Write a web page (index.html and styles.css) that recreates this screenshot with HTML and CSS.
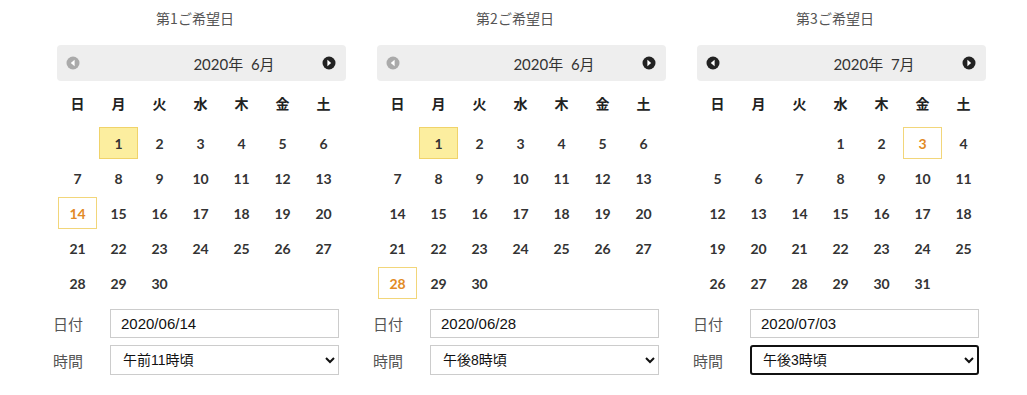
FILE: index.html
```html
<!DOCTYPE html>
<html lang="ja">
<head>
  <meta charset="UTF-8" />
  <meta name="viewport" content="width=device-width, initial-scale=1.0" />
  <title>ご希望日</title>
  <link rel="stylesheet" href="styles.css">
</head>
<body>
  <div class="wishes">

    <div class="wish">
      <div class="wish-title">第1ご希望日</div>
      <div class="cal-head">
        <span class="nav off"><svg width="14" height="14" viewBox="0 0 14 14"><circle cx="7" cy="7" r="6.5"/><path d="M8.6 3.8 L4.8 7 L8.6 10.2 Z"/></svg></span>
        <span class="cal-month">2020年&nbsp; 6月</span>
        <span class="nav"><svg width="14" height="14" viewBox="0 0 14 14"><circle cx="7" cy="7" r="6.5"/><path d="M5.4 3.8 L9.2 7 L5.4 10.2 Z"/></svg></span>
      </div>
      <div class="cal-grid">
        <div class="dow">日</div><div class="dow">月</div><div class="dow">火</div><div class="dow">水</div><div class="dow">木</div><div class="dow">金</div><div class="dow">土</div>
        <div class="day"></div><div class="day"><span class="today">1</span></div><div class="day"><span>2</span></div><div class="day"><span>3</span></div><div class="day"><span>4</span></div><div class="day"><span>5</span></div><div class="day"><span>6</span></div>
        <div class="day"><span>7</span></div><div class="day"><span>8</span></div><div class="day"><span>9</span></div><div class="day"><span>10</span></div><div class="day"><span>11</span></div><div class="day"><span>12</span></div><div class="day"><span>13</span></div>
        <div class="day"><span class="picked">14</span></div><div class="day"><span>15</span></div><div class="day"><span>16</span></div><div class="day"><span>17</span></div><div class="day"><span>18</span></div><div class="day"><span>19</span></div><div class="day"><span>20</span></div>
        <div class="day"><span>21</span></div><div class="day"><span>22</span></div><div class="day"><span>23</span></div><div class="day"><span>24</span></div><div class="day"><span>25</span></div><div class="day"><span>26</span></div><div class="day"><span>27</span></div>
        <div class="day"><span>28</span></div><div class="day"><span>29</span></div><div class="day"><span>30</span></div>
      </div>
      <div class="field">
        <label>日付</label>
        <input type="text" value="2020/06/14">
      </div>
      <div class="field">
        <label>時間</label>
        <select><option>午前11時頃</option></select>
      </div>
    </div>

    <div class="wish">
      <div class="wish-title">第2ご希望日</div>
      <div class="cal-head">
        <span class="nav off"><svg width="14" height="14" viewBox="0 0 14 14"><circle cx="7" cy="7" r="6.5"/><path d="M8.6 3.8 L4.8 7 L8.6 10.2 Z"/></svg></span>
        <span class="cal-month">2020年&nbsp; 6月</span>
        <span class="nav"><svg width="14" height="14" viewBox="0 0 14 14"><circle cx="7" cy="7" r="6.5"/><path d="M5.4 3.8 L9.2 7 L5.4 10.2 Z"/></svg></span>
      </div>
      <div class="cal-grid">
        <div class="dow">日</div><div class="dow">月</div><div class="dow">火</div><div class="dow">水</div><div class="dow">木</div><div class="dow">金</div><div class="dow">土</div>
        <div class="day"></div><div class="day"><span class="today">1</span></div><div class="day"><span>2</span></div><div class="day"><span>3</span></div><div class="day"><span>4</span></div><div class="day"><span>5</span></div><div class="day"><span>6</span></div>
        <div class="day"><span>7</span></div><div class="day"><span>8</span></div><div class="day"><span>9</span></div><div class="day"><span>10</span></div><div class="day"><span>11</span></div><div class="day"><span>12</span></div><div class="day"><span>13</span></div>
        <div class="day"><span>14</span></div><div class="day"><span>15</span></div><div class="day"><span>16</span></div><div class="day"><span>17</span></div><div class="day"><span>18</span></div><div class="day"><span>19</span></div><div class="day"><span>20</span></div>
        <div class="day"><span>21</span></div><div class="day"><span>22</span></div><div class="day"><span>23</span></div><div class="day"><span>24</span></div><div class="day"><span>25</span></div><div class="day"><span>26</span></div><div class="day"><span>27</span></div>
        <div class="day"><span class="picked">28</span></div><div class="day"><span>29</span></div><div class="day"><span>30</span></div>
      </div>
      <div class="field">
        <label>日付</label>
        <input type="text" value="2020/06/28">
      </div>
      <div class="field">
        <label>時間</label>
        <select><option>午後8時頃</option></select>
      </div>
    </div>

    <div class="wish">
      <div class="wish-title">第3ご希望日</div>
      <div class="cal-head">
        <span class="nav"><svg width="14" height="14" viewBox="0 0 14 14"><circle cx="7" cy="7" r="6.5"/><path d="M8.6 3.8 L4.8 7 L8.6 10.2 Z"/></svg></span>
        <span class="cal-month">2020年&nbsp; 7月</span>
        <span class="nav"><svg width="14" height="14" viewBox="0 0 14 14"><circle cx="7" cy="7" r="6.5"/><path d="M5.4 3.8 L9.2 7 L5.4 10.2 Z"/></svg></span>
      </div>
      <div class="cal-grid">
        <div class="dow">日</div><div class="dow">月</div><div class="dow">火</div><div class="dow">水</div><div class="dow">木</div><div class="dow">金</div><div class="dow">土</div>
        <div class="day"></div><div class="day"></div><div class="day"></div><div class="day"><span>1</span></div><div class="day"><span>2</span></div><div class="day"><span class="picked">3</span></div><div class="day"><span>4</span></div>
        <div class="day"><span>5</span></div><div class="day"><span>6</span></div><div class="day"><span>7</span></div><div class="day"><span>8</span></div><div class="day"><span>9</span></div><div class="day"><span>10</span></div><div class="day"><span>11</span></div>
        <div class="day"><span>12</span></div><div class="day"><span>13</span></div><div class="day"><span>14</span></div><div class="day"><span>15</span></div><div class="day"><span>16</span></div><div class="day"><span>17</span></div><div class="day"><span>18</span></div>
        <div class="day"><span>19</span></div><div class="day"><span>20</span></div><div class="day"><span>21</span></div><div class="day"><span>22</span></div><div class="day"><span>23</span></div><div class="day"><span>24</span></div><div class="day"><span>25</span></div>
        <div class="day"><span>26</span></div><div class="day"><span>27</span></div><div class="day"><span>28</span></div><div class="day"><span>29</span></div><div class="day"><span>30</span></div><div class="day"><span>31</span></div>
      </div>
      <div class="field">
        <label>日付</label>
        <input type="text" value="2020/07/03">
      </div>
      <div class="field">
        <label>時間</label>
        <select class="focused"><option>午後3時頃</option></select>
      </div>
    </div>

  </div>
</body>
</html>
```

FILE: styles.css
```css
body {
  margin: 0;
  background: #fff;
  font-family: 'Noto Sans CJK JP', sans-serif;
}

.wishes {
  display: flex;
  gap: 31px;
  padding-left: 57px;
}

.wish {
  width: 289px;
}

.wish-title {
  padding: 8px 13px 0 0;
  line-height: 20px;
  margin-bottom: 17px;
  text-align: center;
  font-size: 14px;
  color: #555;
}

.cal-head {
  height: 36px;
  background: #eee;
  border-radius: 4px;
  display: flex;
  align-items: center;
  padding: 0 10px 0 9px;
}

.cal-month {
  flex: 1;
  text-align: center;
  padding-left: 66px;
  font-family: 'Lato', 'Noto Sans CJK JP', sans-serif;
  font-size: 15px;
  color: #333;
}

.nav {
  display: flex;
}

.nav svg circle {
  fill: #222;
}

.nav svg path {
  fill: #fff;
}

.nav.off svg circle {
  fill: #aaa;
}

.cal-grid {
  display: grid;
  grid-template-columns: repeat(7, 41px);
  margin-bottom: 3px;
  font-family: 'Lato', 'Noto Sans CJK JP', sans-serif;
  font-weight: bold;
  font-size: 14px;
  color: #333;
}

.dow {
  margin-top: 7px;
  margin-bottom: 8px;
  line-height: 30px;
  text-align: center;
  color: #222;
  font-family: 'Noto Sans CJK JP', sans-serif;
}

.day {
  height: 35px;
  padding: 1px 1px 2px;
  box-sizing: border-box;
}

.day span {
  display: block;
  height: 32px;
  line-height: 32px;
  text-align: center;
  border: 1px solid transparent;
  box-sizing: border-box;
}

.day .today {
  background: #fcee9f;
  border-color: #f0d36a;
}

.day .picked {
  border-color: #f2d67a;
  color: #e28a24;
}

.field {
  display: flex;
  align-items: center;
  margin-left: -4px;
  margin-top: 7px;
}

.field label {
  width: 57px;
  font-size: 15px;
  color: #555;
}

.field input,
.field select {
  width: 229px;
  height: 29px;
  box-sizing: border-box;
  border: 1px solid #ccc;
  border-radius: 0;
  background: #fff;
  font-family: 'Liberation Sans', 'Noto Sans CJK JP', sans-serif;
  font-size: 15px;
  color: #111;
  padding: 0 0 0 10px;
}

.field input {
  margin-top: 1px;
}

.field select {
  height: 30px;
  font-size: 14px;
  padding-left: 8px;
}

.field select.focused {
  border: 2px solid #111;
  border-radius: 3px;
  padding-left: 7px;
}
```
